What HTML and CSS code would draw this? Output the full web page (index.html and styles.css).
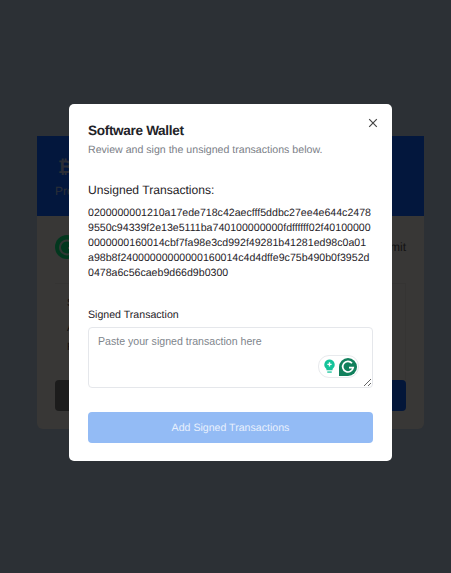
FILE: index.html
```html
<!DOCTYPE html>
<html lang="en">
<head>
<meta charset="utf-8">
<title>Software Wallet</title>
<link rel="stylesheet" href="styles.css">
</head>
<body>
<main class="page">
  <section class="card">
    <header class="card-head">
      <h1 class="brand">₿</h1>
      <p class="brand-sub">Pro</p>
    </header>
    <div class="card-body">
      <div class="wallet-row">
        <svg class="wallet-dot" viewBox="0 0 24 24" width="24" height="24">
          <circle class="dot-bg" cx="12" cy="12" r="12"/>
          <path class="dot-mark" d="M17 7.5A7 7 0 1 0 19 13h-6"/>
        </svg>
        <span class="wallet-submit">mit</span>
      </div>
      <div class="summary">
        <p class="line-a">S</p>
        <p class="line-b">A</p>
        <p class="line-c">F</p>
      </div>
      <div class="actions">
        <span class="back-btn"></span>
        <span class="next-btn"></span>
      </div>
    </div>
  </section>
</main>
<div class="overlay">
  <div class="modal">
    <button class="close" aria-label="Close">
      <svg viewBox="0 0 10 10" width="10" height="10"><path d="M1.2 1.2l7.6 7.6M8.8 1.2l-7.6 7.6"/></svg>
    </button>
    <h2 class="title">Software Wallet</h2>
    <p class="subtitle">Review and sign the unsigned transactions below.</p>
    <h3 class="section-title">Unsigned Transactions:</h3>
    <p class="hex">0200000001210a17ede718c42aecfff5ddbc27ee4e644c2478<br>9550c94339f2e13e5111ba740100000000fdffffff02f40100000<br>0000000160014cbf7fa98e3cd992f49281b41281ed98c0a01<br>a98b8f24000000000000160014c4d4dffe9c75b490b0f3952d<br>0478a6c56caeb9d66d9b0300</p>
    <label class="field-label" for="signed">Signed Transaction</label>
    <div class="field">
      <textarea id="signed" class="input" placeholder="Paste your signed transaction here"></textarea>
      <div class="grammarly">
        <svg class="bulb" viewBox="0 0 14 16" width="13" height="15">
          <path class="bulb-fill" d="M7 .5a5.6 5.6 0 0 1 3.3 10.1V12H3.7v-1.4A5.6 5.6 0 0 1 7 .5z"/>
          <path class="bulb-plus" d="M7 3.4v4.6M4.7 5.7h4.6"/>
          <path class="bulb-base" d="M4.6 14h4.8"/>
        </svg>
        <svg class="g-logo" viewBox="0 0 18 18" width="18" height="18">
          <path class="g-bg" d="M9 0a9 9 0 1 1 0 18H0V9a9 9 0 0 1 9-9z"/>
          <path class="g-mark" d="M13 5.2A5.3 5.3 0 1 0 14.2 9.6H10"/>
        </svg>
      </div>
    </div>
    <button class="submit" disabled>Add Signed Transactions</button>
  </div>
</div>
</body>
</html>
```
FILE: styles.css
```css
* { box-sizing: border-box; }
html, body { margin: 0; height: 100%; }
body {
  width: 451px;
  height: 573px;
  overflow: hidden;
  position: relative;
  background: #93a0b1;
  font-family: "Liberation Sans", Arial, sans-serif;
  text-rendering: geometricPrecision;
}
.page { padding: 136px 27px 0 37px; }
.card {
  width: 387px;
  height: 293px;
  background: #bbb7b4;
  border-radius: 0 0 6px 6px;
  overflow: hidden;
}
.card-head {
  height: 80px;
  background: #0c4ecb;
  padding: 20px 18px;
}
.brand { margin: 0 0 0 3px; font-size: 18px; line-height: 22px; font-weight: 700; color: #8f9cb8; }
.brand-sub { margin: 2px 0 0; font-size: 12px; line-height: 22px; color: #8f9cb8; }
.card-body { padding: 19px 18px 0; }
.wallet-row { display: flex; align-items: center; justify-content: space-between; height: 24px; }
.wallet-dot { display: block; }
.dot-bg { fill: #08b866; }
.dot-mark { stroke: #a8b8b0; stroke-width: 2; fill: none; }
.wallet-submit { font-size: 12px; color: #444; }
.summary { margin-top: 24px; padding: 0 0 0 12px; height: 97px; border-top: 1px solid #b3afac; border-right: 1px solid #b3afac; font-size: 10.6px; color: #333; }
.summary p { margin: 0; line-height: 12px; }
.line-a { padding-top: 13px; }
.line-b { padding-top: 13px; }
.line-c { padding-top: 7px; }
.actions { display: flex; justify-content: space-between; }
.back-btn, .next-btn { display: block; width: 150px; height: 31px; border-radius: 4px; }
.back-btn { background: #5e5e5e; }
.next-btn { background: #0c4ac0; }

.overlay {
  position: absolute;
  inset: 0;
  background: rgba(0, 0, 0, 0.7);
}
.modal {
  position: absolute;
  left: 69px;
  top: 104px;
  width: 323px;
  height: 357px;
  background: #fff;
  border-radius: 5px;
  padding: 18px 19px;
}
.close {
  position: absolute;
  top: 14px;
  right: 14px;
  width: 10px;
  height: 10px;
  padding: 0;
  border: 0;
  background: none;
  display: block;
}
.close svg { display: block; }
.close path { stroke: #444; stroke-width: 1.2; fill: none; }
.title { margin: 0; font-size: 13.6px; line-height: 18px; font-weight: 700; color: #1f2328; letter-spacing: -0.34px; }
.subtitle { margin: 2px 0 0; font-size: 10.6px; line-height: 17px; color: #7b8087; }
.section-title { margin: 22px 0 0; font-size: 12.1px; line-height: 18px; font-weight: 400; color: #1f2328; }
.hex {
  margin: 7px 0 0;
  font-size: 10.6px;
  line-height: 15px;
  color: #1f2328;
  white-space: nowrap;
}
.field-label { display: block; margin-top: 27px; font-size: 10.6px; line-height: 15px; color: #1f2328; }
.field { position: relative; margin-top: 4px; height: 61px; }
.input {
  display: block;
  width: 100%;
  height: 61px;
  border: 1px solid #e5e7eb;
  border-radius: 4px;
  padding: 6px 9px;
  font: 10.6px/15px "Liberation Sans", Arial, sans-serif;
  color: #2a2e33;
  resize: vertical;
  outline: 0;
}
.input::placeholder { color: #80858c; opacity: 1; }
.grammarly {
  position: absolute;
  right: 14px;
  top: 28px;
  width: 41px;
  height: 23px;
  background: #fff;
  border: 1px solid #e8eaed;
  border-radius: 11px;
  display: flex;
  align-items: center;
  justify-content: flex-end;
  gap: 3px;
  padding-right: 1px;
}
.bulb-fill { fill: #15c39a; }
.bulb-plus { stroke: #fff; stroke-width: 1.5; fill: none; }
.bulb-base { stroke: #15c39a; stroke-width: 1.4; fill: none; }
.g-bg { fill: #11805c; }
.g-mark { stroke: #fff; stroke-width: 1.7; fill: none; }
.submit {
  display: block;
  width: 100%;
  height: 31px;
  margin-top: 24px;
  border: 0;
  border-radius: 4px;
  background: #93bbf5;
  color: #e8f0fd;
  font: 10.6px "Liberation Sans", Arial, sans-serif;
  text-rendering: geometricPrecision;
}
```
